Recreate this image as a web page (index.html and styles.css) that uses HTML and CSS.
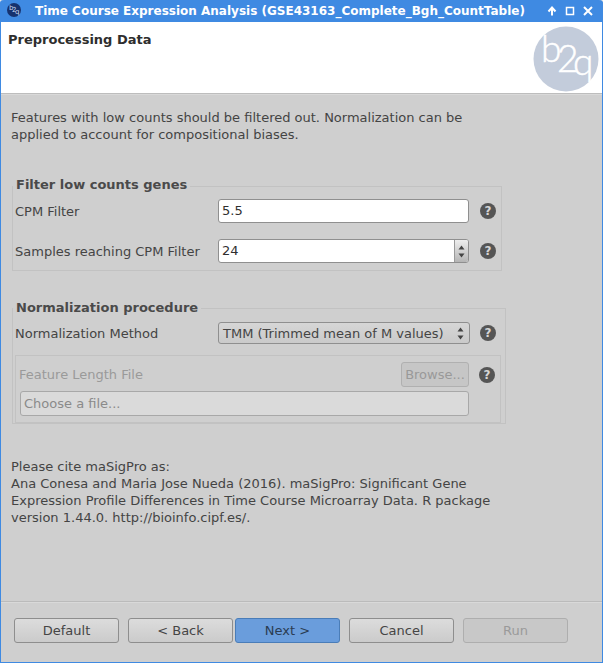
FILE: index.html
```html
<!DOCTYPE html>
<html lang="en">
<head>
<meta charset="utf-8">
<title>Time Course Expression Analysis</title>
<link rel="stylesheet" href="styles.css">
</head>
<body>
<div class="window">
  <div class="titlebar">
    <svg class="app-icon" width="14" height="14" viewBox="0 0 14 14">
      <circle cx="7" cy="7" r="7" fill="#16326e"/>
      <text class="app-icon-text"><tspan x="2" y="7">b</tspan><tspan x="5" y="9">2</tspan><tspan x="8" y="10.500">q</tspan></text>
    </svg>
    <span class="title">Time Course Expression Analysis (GSE43163_Complete_Bgh_CountTable)</span>
    <div class="wm-buttons">
      <svg width="10" height="10" viewBox="0 0 10 10"><path d="M5 9.500V2.500M1.500 5.500L5 1.500L8.500 5.500" fill="none" stroke="#fff" stroke-width="2"/></svg>
      <svg width="10" height="10" viewBox="0 0 10 10"><rect x="1.500" y="1.500" width="7" height="7" fill="none" stroke="#fff" stroke-width="1.500"/></svg>
      <svg width="10" height="10" viewBox="0 0 10 10"><path d="M1 1L9 9M9 1L1 9" fill="none" stroke="#fff" stroke-width="2"/></svg>
    </div>
  </div>
  <header class="header">
    <h1 class="heading">Preprocessing Data</h1>
    <svg class="logo" width="66" height="66" viewBox="0 0 66 66">
      <circle cx="33" cy="33" r="32.500" fill="#c3ccdb"/>
      <text class="logo-text"><tspan x="8" y="36">b</tspan><tspan x="24" y="46">2</tspan><tspan x="40" y="49">q</tspan></text>
    </svg>
  </header>
  <main class="content">
    <p class="intro">Features with low counts should be filtered out. Normalization can be<br>applied to account for compositional biases.</p>
    <section class="group group-filter">
      <h2 class="group-title">Filter low counts genes</h2>
      <div class="row">
        <label class="row-label">CPM Filter</label>
        <div class="input">5.5</div>
        <span class="help">?</span>
      </div>
      <div class="row row-samples">
        <label class="row-label">Samples reaching CPM Filter</label>
        <div class="input spin">
          <span class="spin-value">24</span>
          <span class="spin-arrows">
            <svg width="7" height="5" viewBox="0 0 7 5"><path d="M3.500 0.500L6.500 4.500H0.500Z" fill="#444"/></svg>
            <svg width="7" height="5" viewBox="0 0 7 5"><path d="M3.500 4.500L6.500 0.500H0.500Z" fill="#444"/></svg>
          </span>
        </div>
        <span class="help">?</span>
      </div>
    </section>
    <section class="group group-norm">
      <h2 class="group-title">Normalization procedure</h2>
      <div class="row">
        <label class="row-label">Normalization Method</label>
        <div class="combo">
          <span>TMM (Trimmed mean of M values)</span>
          <span class="combo-arrows">
            <svg width="7" height="5" viewBox="0 0 7 5"><path d="M3.500 0.500L6.500 4.500H0.500Z" fill="#444"/></svg>
            <svg width="7" height="5" viewBox="0 0 7 5"><path d="M3.500 4.500L6.500 0.500H0.500Z" fill="#444"/></svg>
          </span>
        </div>
        <span class="help">?</span>
      </div>
      <div class="subgroup">
        <div class="file-top">
          <label class="file-label">Feature Length File</label>
          <div class="browse">Browse...</div>
          <span class="help">?</span>
        </div>
        <div class="file-input">Choose a file...</div>
      </div>
    </section>
    <p class="cite">Please cite maSigPro as:<br>Ana Conesa and Maria Jose Nueda (2016). maSigPro: Significant Gene<br>Expression Profile Differences in Time Course Microarray Data. R package<br>version 1.44.0. http://bioinfo.cipf.es/.</p>
  </main>
  <footer class="footer">
    <div class="btn">Default</div>
    <div class="btn btn-back">&lt; Back</div>
    <div class="btn btn-primary">Next &gt;</div>
    <div class="btn btn-cancel">Cancel</div>
    <div class="btn btn-disabled">Run</div>
  </footer>
</div>
</body>
</html>
```

FILE: styles.css
```css
* { box-sizing: border-box; }
html, body { margin: 0; padding: 0; }
body { width: 603px; height: 663px; overflow: hidden; background: #e8e8e8; font-family: "DejaVu Sans", sans-serif; font-size: 13px; color: #444; }
.window { width: 603px; height: 663px; display: flex; flex-direction: column; border: 1px solid #3f8ae2; border-top: 0; border-radius: 4px 4px 0 0; }
.titlebar { height: 22px; flex: none; background: #3f8ae2; border-radius: 4px 4px 0 0; display: flex; align-items: center; padding: 0 10px 0 7px; color: #fff; margin: 0 -1px; }
.app-icon { flex: none; margin-top: -3px; }
.app-icon-text { font: 7px "DejaVu Sans", sans-serif; fill: #c8d4ea; }
.title { margin-left: 14px; font-size: 12px; font-weight: bold; white-space: nowrap; flex: 1; }
.wm-buttons { display: flex; gap: 8px; }
.wm-buttons svg { display: block; }
.header { position: relative; height: 72px; flex: none; background: #fff; border-bottom: 1px solid #bdbdbd; }
.heading { margin: 0; padding: 9px 0 0 7px; font-size: 13px; line-height: 17px; font-weight: bold; color: #2e2e2e; }
.logo { position: absolute; left: 532px; top: 4px; }
.logo-text { font: 300 37px "Lato", sans-serif; fill: #fff; stroke: #fff; stroke-width: 0.500; }
.content { flex: 1; display: flex; flex-direction: column; padding: 0 0 0 10px; background: #cfcfcf; box-shadow: inset 0 1px #d9d9d9; }
.intro { margin: 15px 0 0; line-height: 17px; }
.group { position: relative; border: 1px solid #c2c2c2; }
.group-title { position: absolute; left: 0; margin: 0; padding: 0 3px; background: #cfcfcf; font-size: 13px; line-height: 17px; font-weight: bold; color: #4a4a4a; }
.group-filter { width: 490px; height: 85px; margin: 43px 0 0 1px; padding: 12px 0 0 2px; }
.group-filter .group-title { top: -11px; }
.group-norm { width: 494px; height: 116px; margin: 37px 0 0 1px; padding: 13px 0 0 2px; }
.group-norm .group-title { top: -10px; }
.row { display: flex; align-items: center; }
.row-label { width: 203px; flex: none; }
.row-samples { margin-top: 16px; }
.input { width: 251px; height: 24px; background: #fff; border: 1px solid #8f8f8f; border-radius: 3px; color: #2f2f2f; line-height: 22px; padding-left: 3px; }
.input + .help { margin-left: 11px; }
.spin { display: flex; justify-content: space-between; padding: 0; }
.spin-value { padding-left: 3px; }
.spin-arrows { width: 14px; display: flex; flex-direction: column; align-items: center; justify-content: center; gap: 3px; border-left: 1px solid #9a9a9a; background: linear-gradient(#eee, #b5b5b5); border-radius: 0 2px 2px 0; }
.spin-arrows svg, .combo-arrows svg { display: block; }
.help { width: 16px; height: 16px; flex: none; margin-left: 10px; border-radius: 50%; background: #555; color: #d6d6d6; font-weight: bold; font-size: 12px; line-height: 16px; text-align: center; }
.combo { width: 252px; height: 22px; display: flex; justify-content: space-between; align-items: center; border: 1px solid #8f8f8f; border-radius: 3px; background: linear-gradient(#d6d6d6, #cacaca); padding: 0 5px 0 4px; }
.combo-arrows { display: flex; flex-direction: column; gap: 3px; }
.subgroup { width: 486px; height: 68px; margin: 11px 0 0 0; border: 1px solid #c2c2c2; padding: 6px 0 0 3px; }
.file-top { display: flex; align-items: center; }
.file-label { width: 382px; color: #9a9a9a; flex: none; }
.browse { width: 68px; height: 25px; border: 1px solid #b0b0b0; border-radius: 3px; background: #c6c6c6; color: #999; text-align: center; line-height: 23px; }
.file-input { width: 449px; height: 25px; margin: 4px 0 0 1px; background: #dadada; border: 1px solid #a8a8a8; border-radius: 3px; color: #8a8a8a; line-height: 23px; padding-left: 3px; }
.cite { margin: 34px 0 0; line-height: 17px; }
.footer { height: 61px; flex: none; background: #cfcfcf; border-top: 1px solid #bbb; box-shadow: inset 0 1px #d9d9d9; padding: 16px 0 0 13px; display: flex; align-items: flex-start; gap: 9px; }
.btn { width: 105px; height: 25px; flex: none; border: 1px solid #8e8e8e; border-radius: 3px; background: linear-gradient(#dcdcdc, #cbcbcb); color: #454545; text-align: center; line-height: 23px; }
.btn-primary { margin-left: -7px; background: #6a9ddc; border-color: #4a7db8; color: #2b3c52; }
.btn-disabled { border-color: #aeaeae; background: #c8c8c8; color: #9a9a9a; }
```
